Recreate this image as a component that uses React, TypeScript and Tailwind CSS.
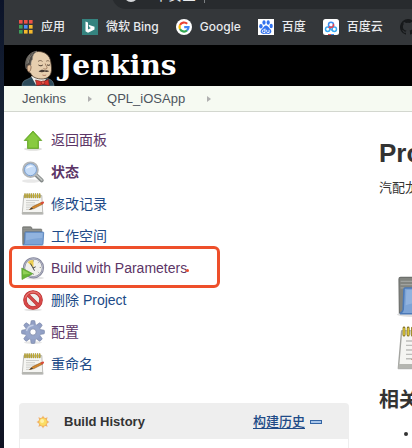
import { ReactNode } from 'react'

interface IconProps {
    className?: string
}

interface Task {
    label: string
    icon: ReactNode
    visited?: boolean
    current?: boolean
    highlighted?: boolean
}

function AppsIcon({ className }: IconProps) {
    const colors = ['#ee5146', '#ee5146', '#ee5146', '#3f9f5a', '#4a8cf7', '#f6b92c', '#3f9f5a', '#f6b92c', '#f6b92c']
    return (
        <svg viewBox="0 0 14 14" className={className} aria-hidden="true">
            {colors.map((color, i) => (
                <rect key={i} x={(i % 3) * 5} y={Math.floor(i / 3) * 5} width="3.600" height="3.600" fill={color} />
            ))}
        </svg>
    )
}

function BingIcon({ className }: IconProps) {
    return (
        <svg viewBox="0 0 16 16" className={className} aria-hidden="true">
            <rect width="16" height="16" fill="#35837f" />
            <path d="M3.500 2.500L6 3.400v7.200l3-1.600-1.500-.8-1-2.400 6 2v2.600L6 13.700l-2.500-1.400z" fill="#fff" />
        </svg>
    )
}

function GoogleIcon({ className }: IconProps) {
    return (
        <svg viewBox="0 0 16 16" className={className} aria-hidden="true">
            <circle cx="8" cy="8" r="8" fill="#fff" />
            <g fill="none" strokeWidth="2.200">
                <path d="M4 6A4.500 4.500 0 0 1 11.200 4.800" stroke="#ea4335" />
                <path d="M4 6a4.500 4.500 0 0 0 0 4" stroke="#fbbc05" />
                <path d="M4 10a4.500 4.500 0 0 0 7 1.400" stroke="#34a853" />
                <path d="M11 11.400A4.500 4.500 0 0 0 12.500 8.200H8.200" stroke="#4285f4" />
            </g>
        </svg>
    )
}

function BaiduIcon({ className }: IconProps) {
    return (
        <svg viewBox="0 0 16 16" className={className} aria-hidden="true">
            <rect width="16" height="16" fill="#fff" />
            <g fill="#3172ee">
                <ellipse cx="2.900" cy="7.200" rx="1.700" ry="2.200" />
                <ellipse cx="6" cy="3.500" rx="1.600" ry="2.300" />
                <ellipse cx="10.200" cy="3.500" rx="1.600" ry="2.300" />
                <ellipse cx="13.200" cy="7" rx="1.600" ry="2.200" />
                <path d="M8 6.600c1.600 0 2.300 1.600 3.600 2.800 1.300 1.100 2.200 2.300 1.600 3.900-.8 2.100-3 1.500-5.200 1.500s-4.400.6-5.200-1.500c-.6-1.600.4-2.700 1.600-3.800C5.700 8.300 6.400 6.600 8 6.600z" />
            </g>
            <path d="M7 9.500v4H5.600a1.300 1.300 0 0 1 0-2.600H7M8.700 10.800v1.800q0 .9 1 .9h1.400v-2.700" fill="none" stroke="#fff" strokeWidth=".9" />
        </svg>
    )
}

function BaiduCloudIcon({ className }: IconProps) {
    return (
        <svg viewBox="0 0 16 16" className={className} aria-hidden="true">
            <rect width="16" height="16" rx="2.500" fill="#fff" />
            <g fill="none" strokeWidth="1.500">
                <circle cx="4.700" cy="10.200" r="2.200" stroke="#39a9f0" />
                <circle cx="11.300" cy="10.200" r="2.200" stroke="#39a9f0" />
                <path d="M6.300 8.700l3.400 3" stroke="#39a9f0" />
                <circle cx="8" cy="5.800" r="2.500" stroke="#3c8df0" />
                <path d="M10.300 4.800a2.500 2.500 0 0 1-3.600 3.200L5.800 9" stroke="#e8464f" />
            </g>
            <path d="M5 15h3v1H5z" fill="#e8464f" />
            <path d="M8 15h3v1H8z" fill="#3c8df0" />
        </svg>
    )
}

function GithubIcon({ className }: IconProps) {
    return (
        <svg viewBox="0 0 16 16" className={className} aria-hidden="true">
            <path
                fill="#17191b"
                d="M8 0a8 8 0 0 0-2.500 15.600c.4.100.5-.2.500-.4v-1.500c-2.200.5-2.700-1-2.700-1-.4-.9-.9-1.200-.9-1.200-.7-.5.100-.5.100-.5.800.100 1.200.8 1.200.8.7 1.200 1.900.9 2.300.7.100-.5.300-.9.500-1.100-1.800-.2-3.600-.9-3.600-4 0-.9.300-1.600.8-2.100-.100-.2-.4-1 .100-2.200 0 0 .7-.2 2.200.8a7.600 7.600 0 0 1 4 0c1.500-1 2.200-.8 2.200-.8.500 1.200.2 2 .100 2.200.5.500.8 1.200.8 2.100 0 3.100-1.900 3.800-3.600 4 .3.200.5.700.5 1.500v2.200c0 .2.100.5.500.4A8 8 0 0 0 8 0z"
            />
        </svg>
    )
}

function ButlerIcon({ className }: IconProps) {
    return (
        <svg viewBox="0 0 34 36" className={className} aria-hidden="true">
            <path d="M1 36c.3-3.500 1.500-5.500 5-6.500l5-2.500 14 1 4 1.500c2.500 1 3.500 3 4 6.500z" fill="#2c4a5a" stroke="#6d8794" strokeWidth=".6" />
            <path d="M10 26l5 9h6l4-6z" fill="#f3f3ee" />
            <path d="M6 13.500C6 6 11 1.500 17.500 1.500S29 5.500 29.800 12c.6 4.500 1.200 7.500.2 11-1 3.500-4.500 6-9 6S11 27.500 9.500 23C7 22.500 5.500 19.500 6 13.500z" fill="#e6ceae" stroke="#4a3a2c" strokeWidth=".8" />
            <path d="M5 18.500C3 9 8 2 16 1.200c-3 1.800-4.800 4.300-4.600 8.300-1.200 1-1.600 3-1.400 5.500-2-.3-3.500.8-3.500 4z" fill="#4d4944" stroke="#8b8780" strokeWidth=".6" />
            <path d="M12 3.500C9 6 7.500 9 7.300 13M9 5C6.500 8 6 11 6 14" fill="none" stroke="#8e8a82" strokeWidth=".8" />
            <path d="M6.800 15.500c2-1.500 3.700 0 3.200 2.500s-1 3.800-2.300 3.800-2.200-4.800-.9-6.300z" fill="#e3bf9b" stroke="#5a4030" strokeWidth=".6" />
            <path d="M17 11.500c1.500-1.300 3-1.300 4.500 0M25.200 11.300c1-.8 2.200-.8 3.200 0" fill="none" stroke="#6b5442" strokeWidth=".8" />
            <path d="M17.500 15c1.500 1 3 1 4.200 0M26 14.700c1 .8 2 .8 3 0" fill="none" stroke="#33261e" strokeWidth="1" />
            <path d="M24.200 13.500c.6 2.500 2.600 3.800 1.600 5-.8.8-2.300.7-3.300 0" fill="none" stroke="#8d674d" strokeWidth=".8" />
            <path d="M17.500 21.500c2.200-2 5-2 6.500-1 1.500-.6 3-.3 4.300.8-1.800 1-3.300.9-4.300.2-1.500.8-4 1.200-6.500 0z" fill="#463a33" />
            <path d="M21.500 25c1.300.6 2.500.6 3.700 0" fill="none" stroke="#95513f" strokeWidth=".7" />
            <path d="M14.500 30l7 1.700 6-2.200.8 6-6-1-6.500 1.300z" fill="#d8342f" stroke="#761e1a" strokeWidth=".6" />
            <circle cx="22" cy="32.600" r="1.700" fill="#ea5c52" stroke="#761e1a" strokeWidth=".6" />
        </svg>
    )
}

function UpArrowIcon({ className }: IconProps) {
    return (
        <svg viewBox="0 0 24 24" className={className} aria-hidden="true">
            <ellipse cx="12" cy="21" rx="9" ry="1.700" fill="#e0e0dd" />
            <path d="M12 3l8.800 9.500h-3.300v8h-11v-8H3.200z" fill="#6fb82a" stroke="#64a328" strokeWidth=".8" strokeLinejoin="round" />
            <path d="M12 4.500l6.800 7.200h-2.300v7.800h-9v-7.800H5.200z" fill="#9ad650" opacity=".6" />
        </svg>
    )
}

function SearchIcon({ className }: IconProps) {
    return (
        <svg viewBox="0 0 24 24" className={className} aria-hidden="true">
            <ellipse cx="10" cy="21" rx="9" ry="1.700" fill="#e8e8e8" />
            <path d="M14.500 14.500l6.300 6" stroke="#858a89" strokeWidth="3.800" strokeLinecap="round" />
            <path d="M15 14.500l5.800 5.500" stroke="#c3c6c4" strokeWidth="1.700" strokeLinecap="round" />
            <circle cx="9.500" cy="9.700" r="7.300" fill="#b6d0f2" stroke="#b3b6b8" strokeWidth="2" />
            <circle cx="9.500" cy="9.700" r="6" fill="#c4dbf7" stroke="#6b93c7" strokeWidth=".8" />
            <path d="M5 9c1-3.500 5-4.500 7.500-2.500C10 6.500 7 8 5 9z" fill="#f3f8ff" />
        </svg>
    )
}

function NotepadIcon({ className }: IconProps) {
    return (
        <svg viewBox="0 0 24 24" className={className} aria-hidden="true">
            <path d="M1 20.500h21.500v2.200H1z" fill="#ddd" />
            <path d="M2.800 3.500h18l1 18.500H1.200z" fill="#f5f5f2" stroke="#a3a4a0" strokeWidth=".7" />
            <path d="M1.300 20h20.400v2H1.200z" fill="#b5b6b1" />
            <path d="M3 3.600h17.600v1.800H3z" fill="#cfcfbf" />
            <path d="M4 2v3.600M6.100 2v3.600M8.200 2v3.600M10.300 2v3.600M12.400 2v3.600M14.500 2v3.600M16.600 2v3.600M18.700 2v3.600" stroke="#857426" strokeWidth="1.400" strokeLinecap="round" />
            <path d="M4 2.200v3.200M6.100 2.200v3.200M8.200 2.200v3.200M10.300 2.200v3.200M12.400 2.200v3.200M14.500 2.200v3.200M16.600 2.200v3.200M18.700 2.200v3.200" stroke="#e6cf36" strokeWidth=".7" strokeLinecap="round" />
            <path d="M5 8.500h13M5 10.700h9M5 13h11M5 15.200h8M5 17.400h6" stroke="#bdbdba" strokeWidth=".7" />
            <path d="M8.500 17.500l3.300-2.900 9-4.300 1.100 1.700-9 4.600z" fill="#d88a2c" stroke="#8a5720" strokeWidth=".6" />
            <path d="M8.500 17.500l2.300-2.100 1.300 1.400z" fill="#3a3935" />
            <path d="M19.500 10.800l2.300-1.200c1.200-.2 1.700 1 .8 1.800l-2 1.100z" fill="#d94a3a" />
        </svg>
    )
}

function FolderIcon({ className }: IconProps) {
    return (
        <svg viewBox="0 0 24 24" className={className} aria-hidden="true">
            <ellipse cx="12" cy="21.300" rx="11.500" ry="1.300" fill="#dedede" />
            <path d="M1.500 3.500q0-.8.800-.8h7.200q1 0 1.300 1l.3 1.300h8.900q.8 0 .8.800v14.700H1.700z" fill="#82847f" stroke="#6d6f6c" strokeWidth=".6" />
            <path d="M2.300 4.700h7.700M2.300 6.300h17.700M2.300 7.900h2" stroke="#a0a29f" strokeWidth=".6" />
            <path d="M4.600 8h17.300q.9 0 .8.900l-.7 11.200q-.1.800-.9.800H2q1.400-.7 1.600-2.200l.4-10q0-.7.600-.7z" fill="#7da4d6" stroke="#4c7ab8" strokeWidth=".8" />
            <path d="M5.200 9h16.400l-.4 5c-6 .2-11 1-16.400 2.600z" fill="#9dbce3" opacity=".65" />
        </svg>
    )
}

function BuildClockIcon({ className }: IconProps) {
    return (
        <svg viewBox="0 0 24 24" className={className} aria-hidden="true">
            <ellipse cx="14" cy="22" rx="9" ry="1.500" fill="#e4e4e4" />
            <circle cx="12.500" cy="11.800" r="9.500" fill="#f0f0ec" stroke="#85879b" strokeWidth="2.200" />
            <circle cx="12.500" cy="11.800" r="9.300" fill="none" stroke="#b8bacb" strokeWidth=".9" />
            <path d="M12.500 11.500L6.500 6.200Q9 3.700 12.500 4z" fill="#ecce52" />
            <path d="M12.500 4.200v1.300M20 11.500h-1.300M12.500 18.800v-1.300M17.800 6.300l-.8.8M17.800 16.700l-.8-.8" stroke="#999" strokeWidth=".9" />
            <path d="M9.500 7.500l2.500 4.500 2.700-1.200M12 12l1.500 2.700" fill="none" stroke="#4a4a4a" strokeWidth="1" />
            <path d="M.8 12l11 5.700L1 23.500z" fill="#69b536" stroke="#5a9c33" strokeWidth=".7" strokeLinejoin="round" />
            <path d="M1.800 13.700l7.500 4-7.300.7z" fill="#92d058" />
        </svg>
    )
}

function ForbiddenIcon({ className }: IconProps) {
    return (
        <svg viewBox="0 0 24 24" className={className} aria-hidden="true">
            <ellipse cx="12" cy="21.800" rx="9" ry="1.300" fill="#e2e2e2" />
            <circle cx="12" cy="12" r="8" fill="#eeeeec" stroke="#b43030" strokeWidth="3.600" />
            <path d="M6.500 6.500l11 11" stroke="#b43030" strokeWidth="3.200" />
            <circle cx="12" cy="12" r="8" fill="none" stroke="#d64848" strokeWidth="2.600" />
            <path d="M6.500 6.500l11 11" stroke="#d64848" strokeWidth="2.200" />
            <path d="M4.500 9.500C5.500 6 8.500 4 12 4s6 1.500 7.300 4.500" fill="none" stroke="#ec8983" strokeWidth="1" />
        </svg>
    )
}

function GearIcon({ className }: IconProps) {
    return (
        <svg viewBox="0 0 24 24" className={className} aria-hidden="true">
            <ellipse cx="12" cy="22.500" rx="9" ry="1.300" fill="#e6e6e6" />
            <g fill="#919fc4" stroke="#7784a6" strokeWidth=".6">
                {[0, 45, 90, 135, 180, 225, 270, 315].map((angle) => (
                    <path key={angle} d="M9.300 6l.9-5.200q1.800-.7 3.600 0l.9 5.200z" transform={`rotate(${angle} 12 12)`} />
                ))}
            </g>
            <circle cx="12" cy="12" r="7.500" fill="#97a6ca" />
            <path d="M5.500 11C6.500 7 9 5.500 12.500 5.300" fill="none" stroke="#c3cde5" strokeWidth="1.500" />
            <circle cx="12" cy="12" r="3.200" fill="#fff" stroke="#7784a6" strokeWidth=".8" />
        </svg>
    )
}

function SunIcon({ className }: IconProps) {
    return (
        <svg viewBox="0 0 16 16" className={className} aria-hidden="true">
            <g fill="#f2b066">
                {[0, 45, 90, 135, 180, 225, 270, 315].map((angle) => (
                    <path key={angle} d="M6 4.500l2-4 2 4z" transform={`rotate(${angle} 8 8)`} />
                ))}
            </g>
            <circle cx="8" cy="8" r="4.800" fill="#fbdc62" stroke="#eda95a" strokeWidth=".8" />
            <circle cx="7" cy="6.800" r="2.200" fill="#fff1a6" />
        </svg>
    )
}

function CrumbArrow() {
    return (
        <svg viewBox="0 0 5 8" className="h-2 w-[5px]" aria-hidden="true">
            <path d="M0 1l4 3-4 3z" fill="#b0b0b0" />
        </svg>
    )
}

const bookmarks = [
    { label: '应用', icon: <AppsIcon className="h-3.5 w-3.5" /> },
    { label: '微软 Bing', icon: <BingIcon className="h-4 w-4" /> },
    { label: 'Google', icon: <GoogleIcon className="h-4 w-4" /> },
    { label: '百度', icon: <BaiduIcon className="h-4 w-4" /> },
    { label: '百度云', icon: <BaiduCloudIcon className="h-4 w-4" /> },
    { label: 'GitHub', icon: <GithubIcon className="h-4 w-4" /> },
]

const tasks: Task[] = [
    { label: '返回面板', icon: <UpArrowIcon className="h-6 w-6" />, visited: true },
    { label: '状态', icon: <SearchIcon className="h-6 w-6" />, visited: true, current: true },
    { label: '修改记录', icon: <NotepadIcon className="h-6 w-6" /> },
    { label: '工作空间', icon: <FolderIcon className="h-6 w-6" /> },
    { label: 'Build with Parameters', icon: <BuildClockIcon className="h-6 w-6" />, visited: true, highlighted: true },
    { label: '删除 Project', icon: <ForbiddenIcon className="h-6 w-6" /> },
    { label: '配置', icon: <GearIcon className="h-6 w-6" />, visited: true },
    { label: '重命名', icon: <NotepadIcon className="h-6 w-6" /> },
]

function BrowserChrome() {
    return (
        <div className="bg-[#34373a] font-[Inter,'Noto_Sans_CJK_SC',sans-serif] text-[#e8eaed]">
            <div className="flex h-[9px] items-end overflow-hidden pl-[108px]">
                <div className="flex h-7 flex-1 shrink-0 items-center rounded-l-full bg-[#282b2e] pl-3 text-sm whitespace-nowrap">
                    <span className="mr-4 h-3.5 w-3.5 rounded-full border-2 border-[#d5d7da]" />
                    <span>不安全</span>
                    <span className="mx-2 h-4 w-px bg-[#7d8083]" />
                </div>
            </div>
            <nav className="flex h-9 items-center gap-[17px] overflow-hidden pl-[15px] text-xs font-medium whitespace-nowrap">
                {bookmarks.map((bookmark) => (
                    <a key={bookmark.label} href="#" className="flex shrink-0 items-center gap-2">
                        {bookmark.icon}
                        {bookmark.label}
                    </a>
                ))}
            </nav>
        </div>
    )
}

function TaskItem({ task }: { task: Task }) {
    return (
        <li className="relative">
            <a
                href="#"
                className={`flex h-8 items-center gap-1.5 pl-0.5 text-sm ${task.visited ? 'text-[#5c3566]' : 'text-[#204a87]'} ${task.current ? 'font-bold' : ''}`}
            >
                {task.icon}
                {task.label}
            </a>
            {task.highlighted && (
                <div className="pointer-events-none absolute -top-1.5 -bottom-1 -left-2.5 w-[211px] rounded-md border-3 border-[#ee4f2a]">
                    <span className="absolute top-5 right-7 h-[3px] w-[3px] rounded-full bg-[#ee4f2a]" />
                </div>
            )}
        </li>
    )
}

export default function App() {
    return (
        <div className="grid min-h-screen grid-cols-[4px_minmax(0,1fr)] overflow-hidden bg-linear-to-b from-[#0b1329] via-[#25323f] to-[#0e1222] font-['Liberation_Sans','Noto_Sans_CJK_SC',sans-serif]">
            <div className="col-start-2 flex flex-col bg-white">
                <BrowserChrome />
                <header className="flex h-[41px] items-end bg-black pl-[17px]">
                    <a href="#" className="flex items-end gap-1 text-white">
                        <ButlerIcon className="h-9 w-[34px]" />
                        <span className="font-['DejaVu_Serif',serif] text-[28px] leading-10 font-bold">Jenkins</span>
                    </a>
                </header>
                <nav className="flex h-[26px] items-center border-b border-[#d3d7cf] bg-[#f6faf2] pl-[18px] text-[13px] text-[#4d545d]">
                    <a href="#" className="mr-[22px]">Jenkins</a>
                    <CrumbArrow />
                    <a href="#" className="mr-[22px] ml-[14px]">QPL_iOSApp</a>
                    <CrumbArrow />
                </nav>
                <div className="grid flex-1 grid-cols-[330px_minmax(0,1fr)] gap-x-[30px] overflow-hidden pl-[15px]">
                    <aside className="flex flex-col gap-[23px] pt-3">
                        <ul>
                            {tasks.map((task) => (
                                <TaskItem key={task.label} task={task} />
                            ))}
                        </ul>
                        <section className="flex-1 rounded-t border border-b-0 border-[#eee]">
                            <div className="flex h-[35px] items-center bg-[#eee] pr-[26px] pl-4">
                                <SunIcon className="mr-3.5 h-3.5 w-3.5" />
                                <h2 className="flex-1 text-[13px] font-bold text-[#333]">Build History</h2>
                                <a href="#" className="text-[13px] font-medium text-[#204a87] underline underline-offset-2">构建历史</a>
                                <button type="button" aria-label="collapse" className="ml-[5px] h-1 w-3 border border-[#3465a4] bg-[#a9c6ea]" />
                            </div>
                        </section>
                    </aside>
                    <main className="overflow-hidden whitespace-nowrap text-[#333]">
                        <h1 className="mt-[25px] text-[26px] leading-8 font-bold">Project QPL_iOSApp</h1>
                        <p className="mt-[9px] text-[13px] leading-5">汽配龙</p>
                        <div className="mt-[74px] flex flex-col gap-1 pl-[17px]">
                            <FolderIcon className="h-12 w-12" />
                            <NotepadIcon className="h-12 w-12" />
                        </div>
                        <h2 className="mt-3.5 text-[20px] leading-7 font-bold">相关链接</h2>
                        <ul className="mt-2 list-disc pl-10 text-[13px] leading-6">
                            <li />
                        </ul>
                    </main>
                </div>
            </div>
        </div>
    )
}
